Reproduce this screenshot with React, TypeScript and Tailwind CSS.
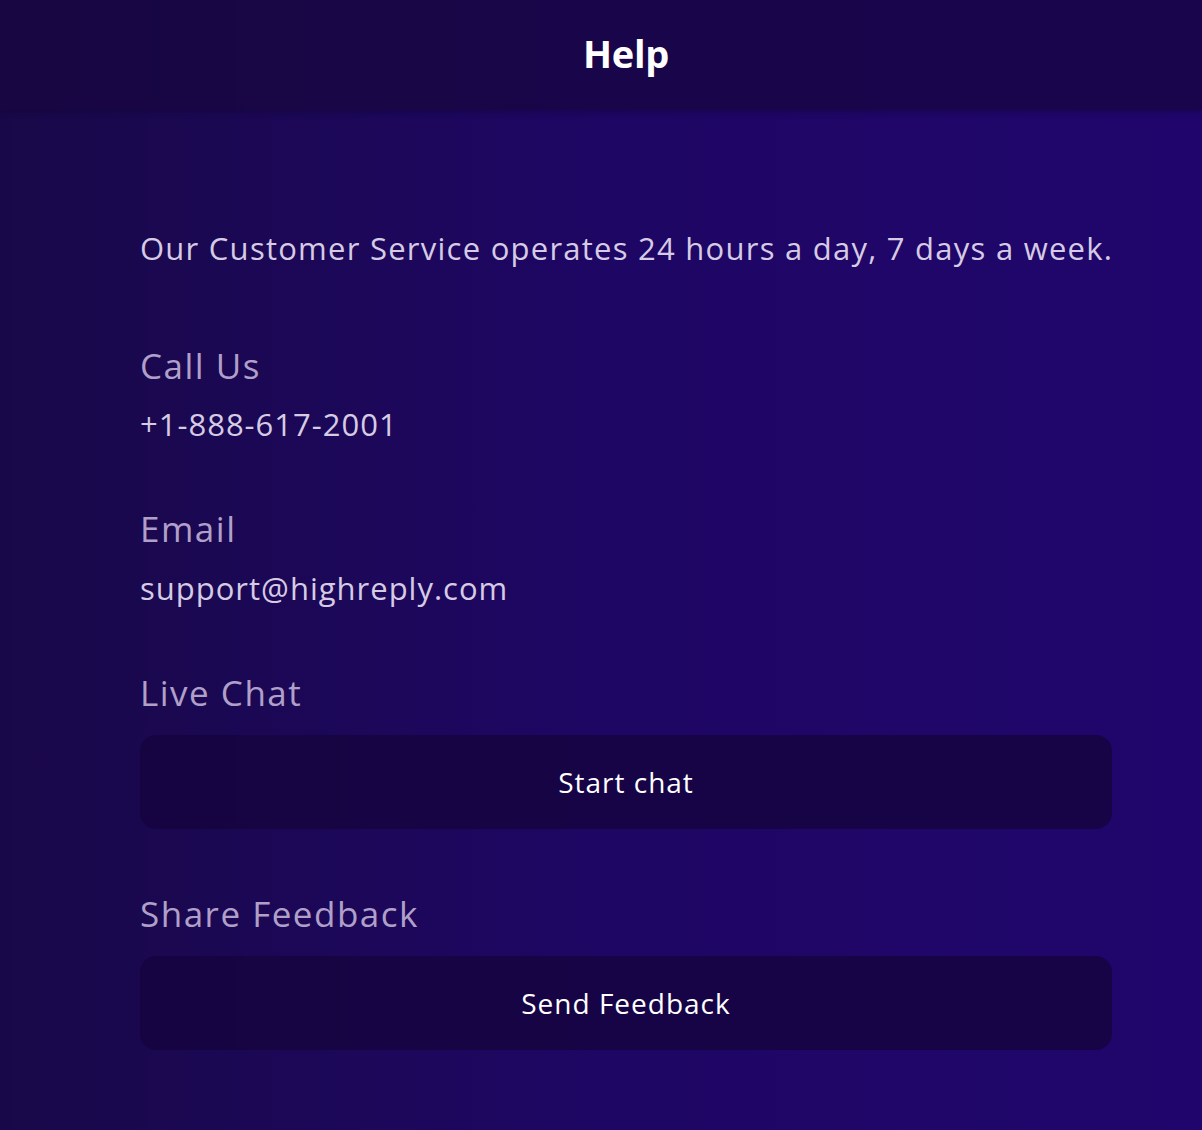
export default function App() {
  const font = { fontFamily: "'Open Sans', 'Noto Sans', sans-serif" }

  return (
    <div
      className="min-h-[1130px] w-full bg-gradient-to-r from-[#190849] via-[#1e0664] to-[#20066c]"
      style={font}
    >
      {/* Header */}
      <header className="h-[110px] bg-[#17053f]/70 shadow-[0_2px_6px_rgba(10,0,40,0.35)]">
        <div className="ml-[140px] flex h-full w-[972px] items-center justify-center pb-[4px]">
          <h1 className="text-[38px] font-bold tracking-[-0.3px] text-white">Help</h1>
        </div>
      </header>

      <main className="ml-[140px] w-[972px] pt-[118px] pb-[80px]">
        <p className="whitespace-nowrap text-[31px] leading-[40px] tracking-[1.25px] text-[#d6cbe4]">
          Our Customer Service operates 24 hours a day, 7 days a week.
        </p>

        <section className="mt-[76px]">
          <h2 className="text-[35px] leading-[44px] tracking-[1.5px] text-[#b0a0c9]">Call Us</h2>
          <p className="mt-[16px] text-[31px] leading-[40px] tracking-[1px] text-[#d6cbe4]">+1-888-617-2001</p>
        </section>

        <section className="mt-[63px]">
          <h2 className="text-[35px] leading-[44px] tracking-[1.5px] text-[#b0a0c9]">Email</h2>
          <p className="mt-[17px] text-[31px] leading-[40px] tracking-[1px] text-[#d6cbe4]">support@highreply.com</p>
        </section>

        <section className="mt-[63px]">
          <h2 className="text-[35px] leading-[44px] tracking-[1.5px] text-[#b0a0c9]">Live Chat</h2>
          <button className="mt-[20px] flex h-[94px] w-full items-center justify-center rounded-[16px] bg-[#15043f]/80 text-[28px] tracking-[1px] text-white">
            Start chat
          </button>
        </section>

        <section className="mt-[63px]">
          <h2 className="text-[35px] leading-[44px] tracking-[1.5px] text-[#b0a0c9]">Share Feedback</h2>
          <button className="mt-[20px] flex h-[94px] w-full items-center justify-center rounded-[16px] bg-[#15043f]/80 text-[28px] tracking-[1px] text-white">
            Send Feedback
          </button>
        </section>
      </main>
    </div>
  )
}
